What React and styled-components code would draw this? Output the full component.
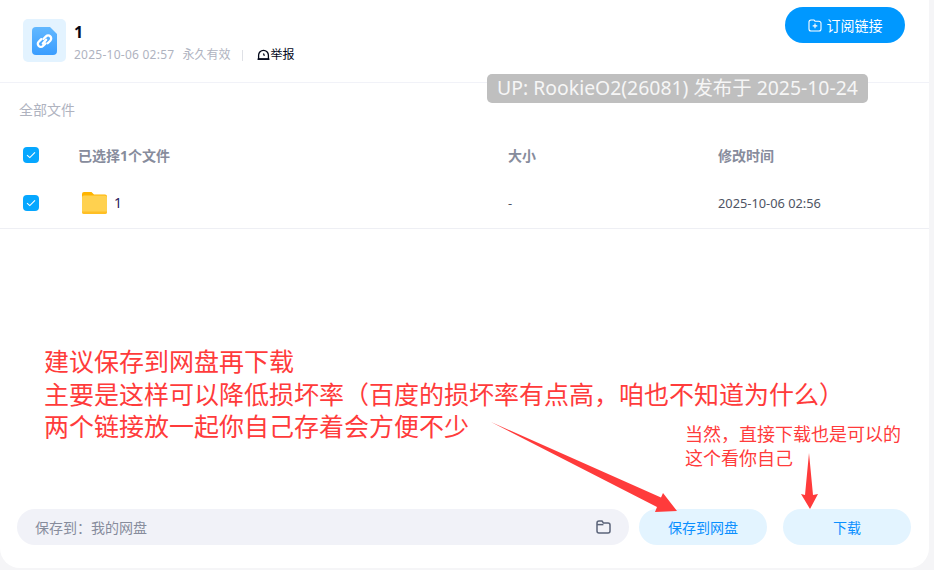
import React from "react";
import styled, { createGlobalStyle } from "styled-components";

const GlobalStyle = createGlobalStyle`
  html, body {
    margin: 0;
    padding: 0;
    background: #f5f5f7;
    font-family: "Noto Sans", "Noto Sans CJK SC", sans-serif;
  }
`;

const Page = styled.div`
  position: relative;
  width: 934px;
  height: 570px;
  overflow: hidden;
`;

const Card = styled.div`
  width: 929px;
  height: 568px;
  background: #fff;
  border-radius: 0 0 20px 20px;
  display: flex;
  flex-direction: column;
`;

const Header = styled.div`
  height: 83px;
  box-sizing: border-box;
  border-bottom: 1px solid #f1f2f8;
  padding: 19px 24px 0 23px;
  display: flex;
  justify-content: space-between;
  align-items: flex-start;
`;

const Share = styled.div`
  display: flex;
  gap: 8px;
`;

const IconBox = styled.div`
  width: 43px;
  height: 43px;
  border-radius: 5px;
  background: #e3f3ff;
  display: flex;
  align-items: center;
  justify-content: center;
`;

const ShareInfo = styled.div`
  display: flex;
  flex-direction: column;
`;

const ShareName = styled.div`
  font-size: 16px;
  line-height: 24px;
  font-weight: 700;
  color: #03081a;
  margin-top: 1px;
`;

const Meta = styled.div`
  display: flex;
  align-items: center;
  font-size: 12px;
  line-height: 18px;
  color: #afb3bf;
  margin-top: 2px;
`;

const MetaDate = styled.span`
  margin-right: 8px;
  letter-spacing: 0.25px;
`;

const MetaItem = styled.span`
  margin-right: 8px;
`;

const Divider = styled.span`
  width: 1px;
  height: 11px;
  background: #dfe1e6;
  margin: 0 14px 0 4px;
`;

const Report = styled.span`
  display: flex;
  align-items: center;
  color: #03081a;
`;

const Subscribe = styled.button`
  width: 120px;
  height: 36px;
  margin-top: -12px;
  border: none;
  border-radius: 18px;
  background: #0098ff;
  color: #fff;
  font: inherit;
  font-size: 14px;
  display: flex;
  align-items: center;
  justify-content: center;
  gap: 5px;
`;

const Crumb = styled.div`
  font-size: 14px;
  line-height: 20px;
  color: #afb3bf;
  padding: 17px 0 0 19px;
`;

const Row = styled.div`
  display: grid;
  grid-template-columns: 55px 430px 210px 1fr;
  align-items: center;
  padding-left: 23px;
  height: ${(p) => p.$height}px;
  margin-top: ${(p) => p.$top || 0}px;
  border-bottom: ${(p) => (p.$line ? "1px solid #eeeff4" : "none")};
  font-size: ${(p) => (p.$head ? 14 : 12.8)}px;
  color: ${(p) => (p.$head ? "#878c9c" : "#4f5464")};
  font-weight: ${(p) => (p.$head ? 700 : 400)};
`;

const Check = styled.span`
  width: 16px;
  height: 16px;
  border-radius: 4px;
  background: #06a7ff;
  display: flex;
  align-items: center;
  justify-content: center;
`;

const FileName = styled.div`
  display: flex;
  align-items: center;
  gap: 7px;
  margin-left: 4px;
  font-size: 14px;
  color: #2c1a5b;
`;

const Footer = styled.div`
  margin-top: auto;
  padding: 0 18px 23px 17px;
  display: flex;
  align-items: center;
`;

const SavePath = styled.div`
  flex: 1;
  height: 36px;
  border-radius: 18px;
  background: #f1f2f8;
  padding: 0 18px;
  display: flex;
  align-items: center;
  justify-content: space-between;
  font-size: 14px;
  color: #878c9c;
`;

const ActionButton = styled.button`
  width: 128px;
  height: 36px;
  margin-left: ${(p) => p.$gap}px;
  border: none;
  border-radius: 18px;
  background: #e3f4ff;
  color: #0a8fff;
  font: inherit;
  font-size: 14px;
`;

const Watermark = styled.div`
  position: absolute;
  left: 487px;
  top: 74px;
  width: 381px;
  height: 29px;
  border-radius: 5px;
  background: #bfbfbf;
  color: #f6f6f6;
  font-size: 19.4px;
  line-height: 28px;
  text-align: center;
  white-space: nowrap;
`;

const Note = styled.div`
  position: absolute;
  left: ${(p) => p.$left}px;
  top: ${(p) => p.$top}px;
  font-size: ${(p) => p.$size}px;
  line-height: ${(p) => p.$lineHeight}px;
  color: #ff3b3b;
  white-space: nowrap;
`;

const Arrows = styled.svg`
  position: absolute;
  left: 0;
  top: 0;
  pointer-events: none;
`;

const Tick = () => (
  <svg width="10" height="8" viewBox="0 0 10 8" fill="none">
    <path d="M1 4.2 3.8 6.6 9 1.4" stroke="#fff" strokeWidth="1.1" />
  </svg>
);

const LinkFile = () => (
  <svg width="25" height="28" viewBox="0 0 25 28">
    <defs>
      <linearGradient id="fileFill" x1="0" y1="0" x2="0" y2="1">
        <stop offset="0" stopColor="#62b8ff" />
        <stop offset="1" stopColor="#3a9dff" />
      </linearGradient>
    </defs>
    <path d="M4 0h14l7 7v17a4 4 0 0 1-4 4H4a4 4 0 0 1-4-4V4a4 4 0 0 1 4-4z" fill="url(#fileFill)" />
    <g fill="none" stroke="#fff" strokeWidth="2.3" strokeLinecap="round">
      <path d="M11.4 12l2.6-2.6a3 3 0 0 1 4.3 4.3l-2.6 2.6" />
      <path d="M13.6 16.4L11 19a3 3 0 0 1-4.3-4.3l2.6-2.6" />
      <path d="M10.8 16.6l3.4-3.8" />
    </g>
  </svg>
);

const Folder = () => (
  <svg width="25" height="22" viewBox="0 0 25 22">
    <path d="M2 0h7.5l2.5 2.5h11a2 2 0 0 1 2 2V8H0V2a2 2 0 0 1 2-2z" fill="#ffb400" />
    <path d="M2 3.5h21a2 2 0 0 1 2 2V20a2 2 0 0 1-2 2H2a2 2 0 0 1-2-2V5.5a2 2 0 0 1 2-2z" fill="#ffd14f" />
    <path d="M0 19.5V20a2 2 0 0 0 2 2h21a2 2 0 0 0 2-2v-.5z" fill="#ffbf24" />
  </svg>
);

const AddFolder = () => (
  <svg width="14" height="13" viewBox="0 0 14 13" fill="none" stroke="#fff" strokeWidth="1.1">
    <path d="M1 3a2 2 0 0 1 2-2h3l1 1.2h4a2 2 0 0 1 2 2V10a2 2 0 0 1-2 2H3a2 2 0 0 1-2-2z" />
    <path d="M7 4.6v4.6M4.7 6.9h4.6" />
  </svg>
);

const ReportIcon = () => (
  <svg width="13" height="12" viewBox="0 0 13 12" fill="none" stroke="#03081a" strokeWidth="1.3">
    <path d="M1.6 10V6.2a4.9 4.9 0 0 1 9.8 0V10z" />
    <path d="M.5 10.2h12" />
    <path d="M6.4 4.4l1 2.4" />
  </svg>
);

const PathFolder = () => (
  <svg width="15" height="14" viewBox="0 0 15 14" fill="none" stroke="#5b6479" strokeWidth="1.5">
    <path d="M1 3a2 2 0 0 1 2-2h3l1.4 2H12a2 2 0 0 1 2 2v6a2 2 0 0 1-2 2H3a2 2 0 0 1-2-2z" />
    <path d="M1 4.6h6.4" />
  </svg>
);

export default function App() {
  return (
    <Page>
      <GlobalStyle />
      <Card>
        <Header>
          <Share>
            <IconBox>
              <LinkFile />
            </IconBox>
            <ShareInfo>
              <ShareName>1</ShareName>
              <Meta>
                <MetaDate>2025-10-06 02:57</MetaDate>
                <MetaItem>永久有效</MetaItem>
                <Divider />
                <Report>
                  <ReportIcon />
                  举报
                </Report>
              </Meta>
            </ShareInfo>
          </Share>
          <Subscribe>
            <AddFolder />
            订阅链接
          </Subscribe>
        </Header>
        <Crumb>全部文件</Crumb>
        <Row $head $height={44} $top={13}>
          <Check>
            <Tick />
          </Check>
          <span>已选择1个文件</span>
          <span>大小</span>
          <span>修改时间</span>
        </Row>
        <Row $height={51} $line>
          <Check>
            <Tick />
          </Check>
          <FileName>
            <Folder />1
          </FileName>
          <span>-</span>
          <span>2025-10-06 02:56</span>
        </Row>
        <Footer>
          <SavePath>
            <span>保存到：我的网盘</span>
            <PathFolder />
          </SavePath>
          <ActionButton $gap={10}>保存到网盘</ActionButton>
          <ActionButton $gap={16}>下载</ActionButton>
        </Footer>
      </Card>
      <Watermark>UP: RookieO2(26081) 发布于 2025-10-24</Watermark>
      <Note $left={44} $top={345} $size={25} $lineHeight={32.5}>
        建议保存到网盘再下载
        <br />
        主要是这样可以降低损坏率（百度的损坏率有点高，咱也不知道为什么）
        <br />
        两个链接放一起你自己存着会方便不少
      </Note>
      <Note $left={685} $top={422} $size={18} $lineHeight={24}>
        当然，直接下载也是可以的
        <br />
        这个看你自己
      </Note>
      <Arrows width="934" height="570" viewBox="0 0 934 570">
        <path d="M491 422 L661 497.5 L663 493 L677 511 L655 512 L657 507 Z" fill="#ff3b3b" />
        <path d="M809 453 L813 495 L818 494 L810 509 L801 494 L805 495 Z" fill="#ff3b3b" />
      </Arrows>
    </Page>
  );
}
